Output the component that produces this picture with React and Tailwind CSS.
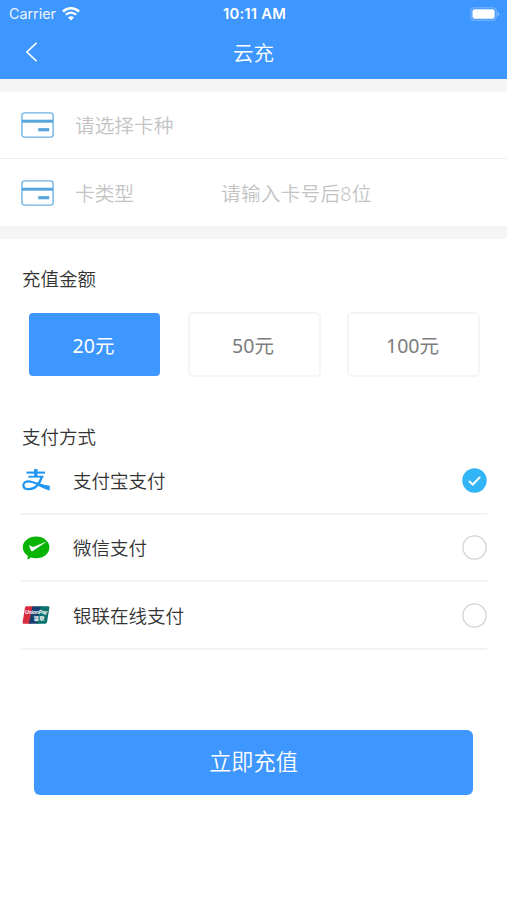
import React, { useState } from 'react';

const amounts = [20, 50, 100];

const WifiIcon = () => (
  <svg width="18" height="14" viewBox="0 0 18 14" fill="none" stroke="white">
    <path d="M1 4.7C5.4 0.2 12.6 0.2 17 4.7" strokeWidth="2.5" />
    <path d="M3.9 7.8C6.8 4.9 11.2 4.9 14.1 7.8" strokeWidth="2.3" />
    <path d="M9 13.4L6 10.4C7.7 8.8 10.3 8.8 12 10.4Z" fill="white" stroke="none" />
  </svg>
);

const BatteryIcon = () => (
  <svg width="30" height="14" viewBox="0 0 30 14" fill="none">
    <rect x="0.9" y="0.7" width="25.4" height="12.6" rx="3.6" stroke="white" strokeOpacity="0.32" strokeWidth="1.1" />
    <rect x="2.5" y="2.3" width="22.2" height="9.4" rx="2.2" fill="white" />
    <path d="M27.7 4.9C29.7 5.6 29.7 8.4 27.7 9.1Z" fill="white" fillOpacity="0.45" />
  </svg>
);

const CardIcon = () => (
  <svg width="33" height="26" viewBox="0 0 33 26" fill="none">
    <rect x="0.9" y="0.9" width="31.2" height="24.2" rx="2.6" stroke="#6db3e3" strokeWidth="1.4" />
    <path d="M1 9.2H32" stroke="#58a5dc" strokeWidth="3" />
    <path d="M17.2 17.7H28.2" stroke="#58a5dc" strokeWidth="3.2" />
  </svg>
);

const AlipayIcon = () => (
  <svg width="28" height="24" viewBox="0 0 28 24" fill="none" stroke="#2196f0">
    <path d="M4.4 4.6H23" strokeWidth="2.1" />
    <path d="M13.8 1V8.6" strokeWidth="3.4" />
    <path d="M6.4 8.7H21.4" strokeWidth="1.9" />
    <path d="M20 8.2C18.4 13.6 14.6 21.2 7 21.2C3.4 21.2 1.4 19.6 1.4 17.2C1.4 14.9 3.6 13.3 6.6 13.3C11.4 13.3 16.5 17 27 19.8" strokeWidth="2.3" />
    <path d="M15.6 14.4C19.6 16.2 24 17.3 27.8 17.7V22.4C23 21.2 18.4 19 14.4 16.7Z" fill="#2196f0" stroke="none" />
  </svg>
);

const WechatPayIcon = () => (
  <svg width="28" height="24" viewBox="0 0 28 24">
    <path d="M14.2 0.6C21.7 0.6 27.4 5.4 27.4 11.4S21.7 22.2 14.2 22.2C12.3 22.2 10.5 21.9 8.9 21.4C7.6 22.2 6.4 23 5.3 23.6L5.9 19.8C2.8 17.8 0.8 14.8 0.8 11.4C0.8 5.4 6.7 0.6 14.2 0.6Z" fill="#09b407" />
    <path d="M6.8 9.2L11.3 10.9L25.2 5.2L10.8 15.1C9.9 15.6 9.4 15.4 9 14.6Z" fill="white" />
  </svg>
);

const UnionPayIcon = () => (
  <svg width="28" height="18" viewBox="0 0 28 18">
    <path d="M4.5 0.3H12L8.6 17.7H1.8Q0.3 17.7 0.6 16.2L3 1.6Q3.2 0.3 4.5 0.3Z" fill="#d92a3e" />
    <path d="M10.5 0.3H20L16.4 17.7H6.9Z" fill="#18406f" />
    <path d="M18.5 0.3H26.2Q27.7 0.3 27.4 1.8L25 16.3Q24.7 17.7 23.3 17.7H14.9Z" fill="#08736f" />
    <text x="3" y="8" fill="white" fontSize="5.2" fontWeight="700" fontStyle="italic" fontFamily="Liberation Sans, sans-serif" textLength="22.5">UnionPay</text>
    <text x="11.8" y="14" fill="white" fontSize="5" fontWeight="700" fontFamily="Noto Sans CJK SC, sans-serif" textLength="10.6">银联</text>
  </svg>
);

const methods = [
  { id: 'alipay', name: '支付宝支付', icon: <AlipayIcon /> },
  { id: 'wechat', name: '微信支付', icon: <WechatPayIcon /> },
  { id: 'unionpay', name: '银联在线支付', icon: <UnionPayIcon /> }
];

const Radio = ({ checked }) => (
  <svg width="25" height="25" viewBox="0 0 25 25" fill="none">
    {checked ? (
      <>
        <circle cx="12.5" cy="12.5" r="12.2" fill="#32b5f6" />
        <path d="M6.9 12.9L10.8 16.5L18.1 8.9" stroke="white" strokeWidth="2" />
      </>
    ) : (
      <circle cx="12.5" cy="12.5" r="11.6" stroke="#d3d3d3" strokeWidth="1.3" />
    )}
  </svg>
);

const App = () => {
  const [amount, setAmount] = useState(20);
  const [method, setMethod] = useState('alipay');

  return (
    <div className="min-h-[900px] bg-white font-['Noto_Sans_CJK_SC',sans-serif] font-[350] text-[#333]">
      <header className="h-[79px] bg-[#3e96ff] text-white">
        <div className="grid h-7 grid-cols-3 items-center pl-[9px] pr-[7px] font-['Inter',sans-serif]">
          <div className="flex items-center gap-1.5">
            <span className="text-[14.3px] font-normal text-white/90">Carrier</span>
            <WifiIcon />
          </div>
          <div className="whitespace-nowrap text-center text-[14.8px] font-semibold tracking-[0.2px]">10:11 AM</div>
          <div className="flex justify-end">
            <BatteryIcon />
          </div>
        </div>
        <div className="grid h-12 grid-cols-3 items-center">
          <button className="pl-[25px]">
            <svg width="13" height="20" viewBox="0 0 13 20" fill="none" stroke="white" strokeWidth="1.6">
              <path d="M11.5 0.8L1.9 10L11.5 19.2" />
            </svg>
          </button>
          <h1 className="text-center text-[20.5px] font-[350]">云充</h1>
        </div>
      </header>

      <div className="border-y-[13px] border-[#f5f5f5] text-[19.7px] text-[#c3c3c3]">
        <div className="flex h-[67px] items-center border-b border-[#efefef] pl-[21px]">
          <CardIcon />
          <span className="ml-[21px]">请选择卡种</span>
        </div>
        <div className="flex h-[67px] items-center pl-[21px]">
          <CardIcon />
          <span className="ml-[21px] w-[146px]">卡类型</span>
          <span className="pt-0.5 font-['Noto_Sans','Noto_Sans_CJK_SC',sans-serif] tracking-[0.2px]">请输入卡号后8位</span>
        </div>
      </div>

      <section className="pt-[25px]">
        <h2 className="pl-[22px] text-[18.5px] font-[350] leading-7">充值金额</h2>
        <div className="mt-5 flex justify-between pl-7 pr-[27px]">
          {amounts.map(item => (
            <button
              key={item}
              onClick={() => setAmount(item)}
              className={`h-[65px] w-[133px] rounded-[5px] pt-0.5 font-['Noto_Sans','Noto_Sans_CJK_SC',sans-serif] text-[19.5px] font-normal ${
                amount === item
                  ? 'border border-transparent bg-[#3e96ff] bg-clip-padding pr-0.5 text-white'
                  : 'border-2 border-[#f5f5f5] pr-0.5 text-[#7c7c7c]'
              }`}
            >
              {item}元
            </button>
          ))}
        </div>
      </section>

      <section className="pl-[21px] pr-5 pt-[45px]">
        <h2 className="pl-px text-[18.5px] font-[350] leading-7">支付方式</h2>
        <div className="-mt-[3px]">
          {methods.map(item => (
            <button
              key={item.id}
              onClick={() => setMethod(item.id)}
              className="flex h-[67.5px] w-full items-center border-b-2 border-[#f3f3f3] pt-px text-left"
            >
              <span className="flex w-[52px] pl-px">{item.icon}</span>
              <span className="grow pt-px text-[18.5px]">{item.name}</span>
              <Radio checked={method === item.id} />
            </button>
          ))}
        </div>
      </section>

      <div className="px-[34px] pt-20">
        <button className="h-[65px] w-full rounded-md bg-[#3e96ff] pb-0.5 text-[22.2px] text-white">
          立即充值
        </button>
      </div>
    </div>
  );
};

export default App;
